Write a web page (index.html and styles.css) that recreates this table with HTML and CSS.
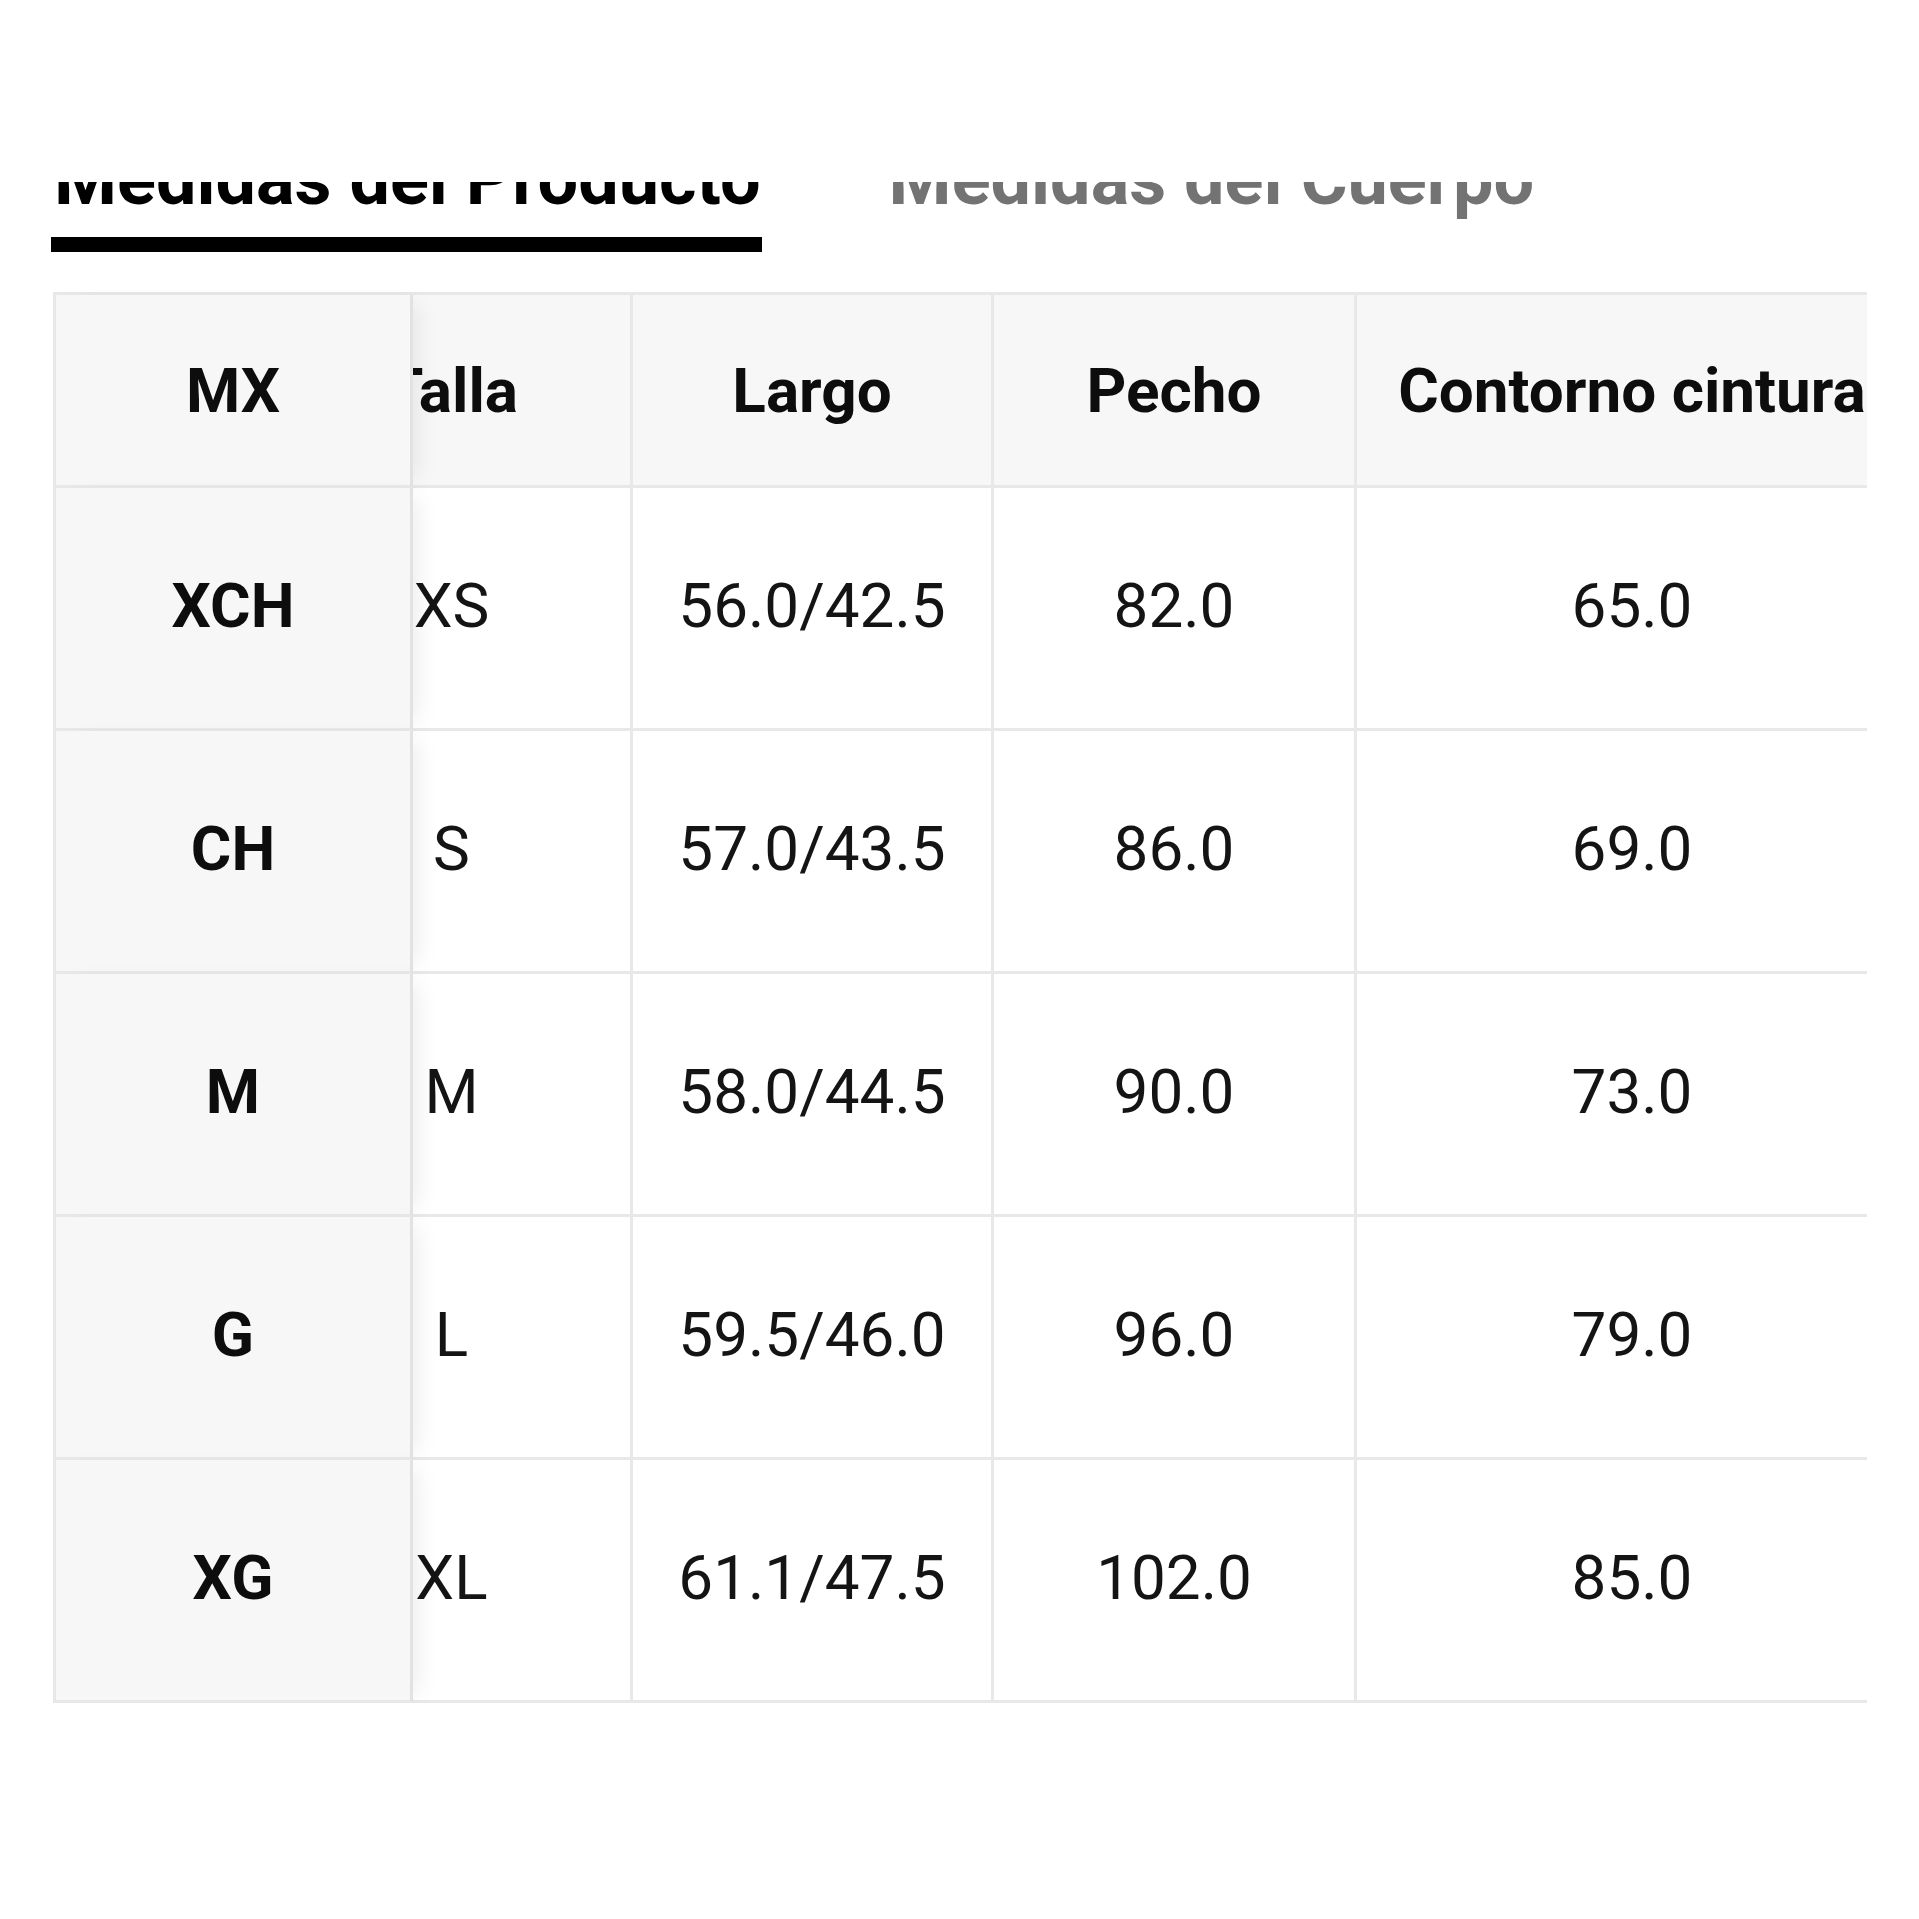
FILE: index.html
```html
<!DOCTYPE html>
<html lang="es">
<head>
<meta charset="utf-8">
<title>Guía de tallas</title>
<link rel="stylesheet" href="styles.css">
</head>
<body>
<div class="page">
  <div class="tabs">
    <div class="tab tab-active">
      <span class="tab-label">Medidas del Producto</span>
      <span class="tab-bar"></span>
    </div>
    <div class="tab">
      <span class="tab-label">Medidas del Cuerpo</span>
      <span class="tab-bar"></span>
    </div>
  </div>

  <div class="table-scroll" id="scroller">
    <table class="size-table">
      <colgroup>
        <col class="c-mx">
        <col class="c-talla">
        <col class="c-largo">
        <col class="c-pecho">
        <col class="c-cintura">
      </colgroup>
      <thead>
        <tr>
          <th class="sticky">MX</th>
          <th>Talla</th>
          <th>Largo</th>
          <th>Pecho</th>
          <th>Contorno cintura</th>
        </tr>
      </thead>
      <tbody>
        <tr><th class="sticky">XCH</th><td>XS</td><td>56.0/42.5</td><td>82.0</td><td>65.0</td></tr>
        <tr><th class="sticky">CH</th><td>S</td><td>57.0/43.5</td><td>86.0</td><td>69.0</td></tr>
        <tr><th class="sticky">M</th><td>M</td><td>58.0/44.5</td><td>90.0</td><td>73.0</td></tr>
        <tr><th class="sticky">G</th><td>L</td><td>59.5/46.0</td><td>96.0</td><td>79.0</td></tr>
        <tr><th class="sticky">XG</th><td>XL</td><td>61.1/47.5</td><td>102.0</td><td>85.0</td></tr>
      </tbody>
    </table>
  </div>
</div>
<script src="script.js"></script>
</body>
</html>
```

FILE: styles.css
```css
html, body {
  margin: 0;
  padding: 0;
  background: #ffffff;
}

body {
  font-family: Roboto, "Liberation Sans", sans-serif;
  color: #111111;
}

.page {
  width: 1919px;
}

.tabs {
  display: flex;
  align-items: flex-end;
  gap: 124px;
  height: 70px;
  margin-top: 182px;
  padding-left: 51px;
  overflow: hidden;
}

.tab {
  display: flex;
  flex-direction: column;
}

.tab-label {
  font-size: 72px;
  line-height: 72px;
  font-weight: 700;
  padding: 0 1px 0 3px;
  margin-bottom: 21px;
  white-space: nowrap;
  color: #737373;
}

.tab-active .tab-label {
  color: #000000;
}

.tab-bar {
  display: block;
  height: 15px;
  background: transparent;
}

.tab-active .tab-bar {
  background: #000000;
}

.table-scroll {
  margin: 40px 52px 0 53px;
  overflow: hidden;
}

.size-table {
  border-collapse: separate;
  border-spacing: 0;
  table-layout: fixed;
  width: 1994px;
  border-top: 3px solid #e8e8e8;
}

.c-mx { width: 360px; }
.c-talla { width: 360px; }
.c-largo { width: 361px; }
.c-pecho { width: 363px; }
.c-cintura { width: 550px; }

.size-table th,
.size-table td {
  padding: 0;
  text-align: center;
  vertical-align: middle;
  font-size: 62px;
  white-space: nowrap;
  border-right: 3px solid #e8e8e8;
  border-bottom: 3px solid #e8e8e8;
  overflow: hidden;
}

.size-table tbody th,
.size-table tbody td {
  padding-bottom: 5px;
}

.size-table thead tr {
  height: 193px;
}

.size-table tbody tr {
  height: 243px;
}

.size-table thead th {
  background: #f7f7f7;
  font-weight: 700;
  color: #0d0d0d;
}

.size-table tbody td {
  background: #ffffff;
  font-weight: 400;
  color: #141414;
}

.size-table th.sticky {
  position: sticky;
  left: 0;
  z-index: 2;
  background: #f7f7f7;
  font-weight: 700;
  color: #0d0d0d;
  border-left: 3px solid #e8e8e8;
  border-right-color: #e2e2e2;
  box-shadow: 14px 0 22px -10px rgba(0, 0, 0, 0.08);
}

.size-table thead th:last-child,
.size-table tbody td:last-child {
  border-right: none;
}
```

FILE: script.js
```js
document.getElementById('scroller').scrollLeft = 140;
```
